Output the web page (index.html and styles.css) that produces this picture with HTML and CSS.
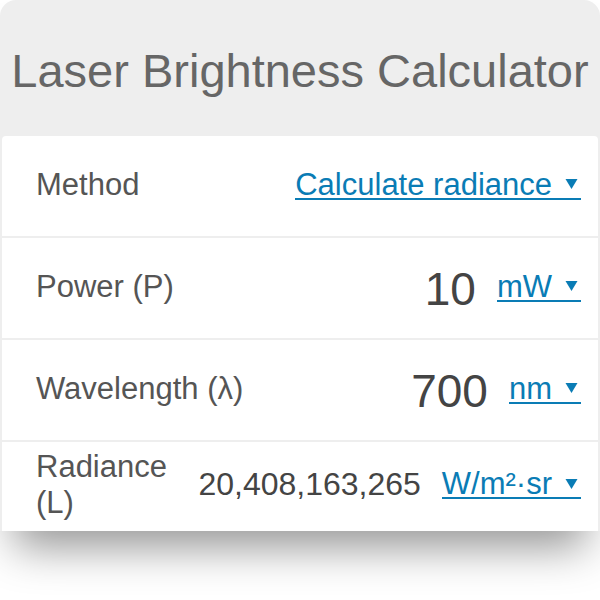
FILE: index.html
```html
<!DOCTYPE html>
<html lang="en">
  <head>
    <meta charset="UTF-8" />
    <meta name="viewport" content="width=device-width, initial-scale=1.0" />
    <title>Laser Brightness Calculator</title>
    <link rel="stylesheet" href="styles.css">
  </head>
  <body>
    <div class="calculator">
      <h1 class="calc-title">Laser Brightness Calculator</h1>

      <div class="calc-row">
        <span class="calc-label">Method</span>
        <div class="calc-field">
          <a class="unit-select" href="#">Calculate radiance<span class="caret"><svg viewBox="0 0 12 10"><path d="M0 0H12L6 10Z" /></svg></span></a>
        </div>
      </div>

      <div class="calc-row">
        <span class="calc-label">Power (P)</span>
        <div class="calc-field">
          <span class="calc-value big">10</span>
          <a class="unit-select" href="#">mW<span class="caret"><svg viewBox="0 0 12 10"><path d="M0 0H12L6 10Z" /></svg></span></a>
        </div>
      </div>

      <div class="calc-row">
        <span class="calc-label">Wavelength (λ)</span>
        <div class="calc-field">
          <span class="calc-value big">700</span>
          <a class="unit-select" href="#">nm<span class="caret"><svg viewBox="0 0 12 10"><path d="M0 0H12L6 10Z" /></svg></span></a>
        </div>
      </div>

      <div class="calc-row last">
        <span class="calc-label">Radiance (L)</span>
        <div class="calc-field">
          <span class="calc-value">20,408,163,265</span>
          <a class="unit-select" href="#">W/m²·sr<span class="caret"><svg viewBox="0 0 12 10"><path d="M0 0H12L6 10Z" /></svg></span></a>
        </div>
      </div>
    </div>
  </body>
</html>
```

FILE: styles.css
```css
html,
body {
  height: 100%;
}

body {
  margin: 0;
  font-family: "Liberation Sans", Arial, sans-serif;
  background-color: #fff;
}

.calculator {
  position: relative;
  background-color: #eeeeee;
  border-radius: 16px 16px 0 0;
  padding: 0 2px;
  box-shadow: 0 30px 44px -14px rgba(0, 0, 0, 0.42);
}

.calc-title {
  margin: 0;
  height: 136px;
  display: flex;
  align-items: center;
  justify-content: center;
  font-size: 47px;
  font-weight: normal;
  color: #666;
  padding-top: 4px;
  box-sizing: border-box;
}

.calc-row {
  display: flex;
  align-items: center;
  justify-content: space-between;
  gap: 16px;
  height: 100px;
  margin-bottom: 2px;
  padding: 0 17px 2px 34px;
  box-sizing: border-box;
  background-color: #fff;
  font-size: 31px;
}

.calc-row:first-of-type {
  border-radius: 4px 4px 0 0;
}

.calc-row.last {
  height: 89px;
  margin-bottom: 0;
  padding-bottom: 4px;
}

.calc-label {
  color: #555;
  line-height: 36px;
}

.calc-field {
  display: flex;
  align-items: center;
  gap: 21px;
  flex-shrink: 0;
}

.calc-value {
  color: #444;
  font-size: 32px;
}

.calc-value.big {
  font-size: 46px;
  padding-top: 4px;
}

/* link-style dropdown: text and caret share one underline */
.unit-select {
  display: inline-flex;
  align-items: center;
  line-height: 27px;
  color: #0a7cb5;
  text-decoration: none;
  border-bottom: 2px solid #0a7cb5;
  white-space: nowrap;
}

.caret {
  display: inline-flex;
  padding: 0 3px 0 13px;
}

.caret svg {
  width: 13px;
  height: 10px;
  fill: #0a7cb5;
}
```
